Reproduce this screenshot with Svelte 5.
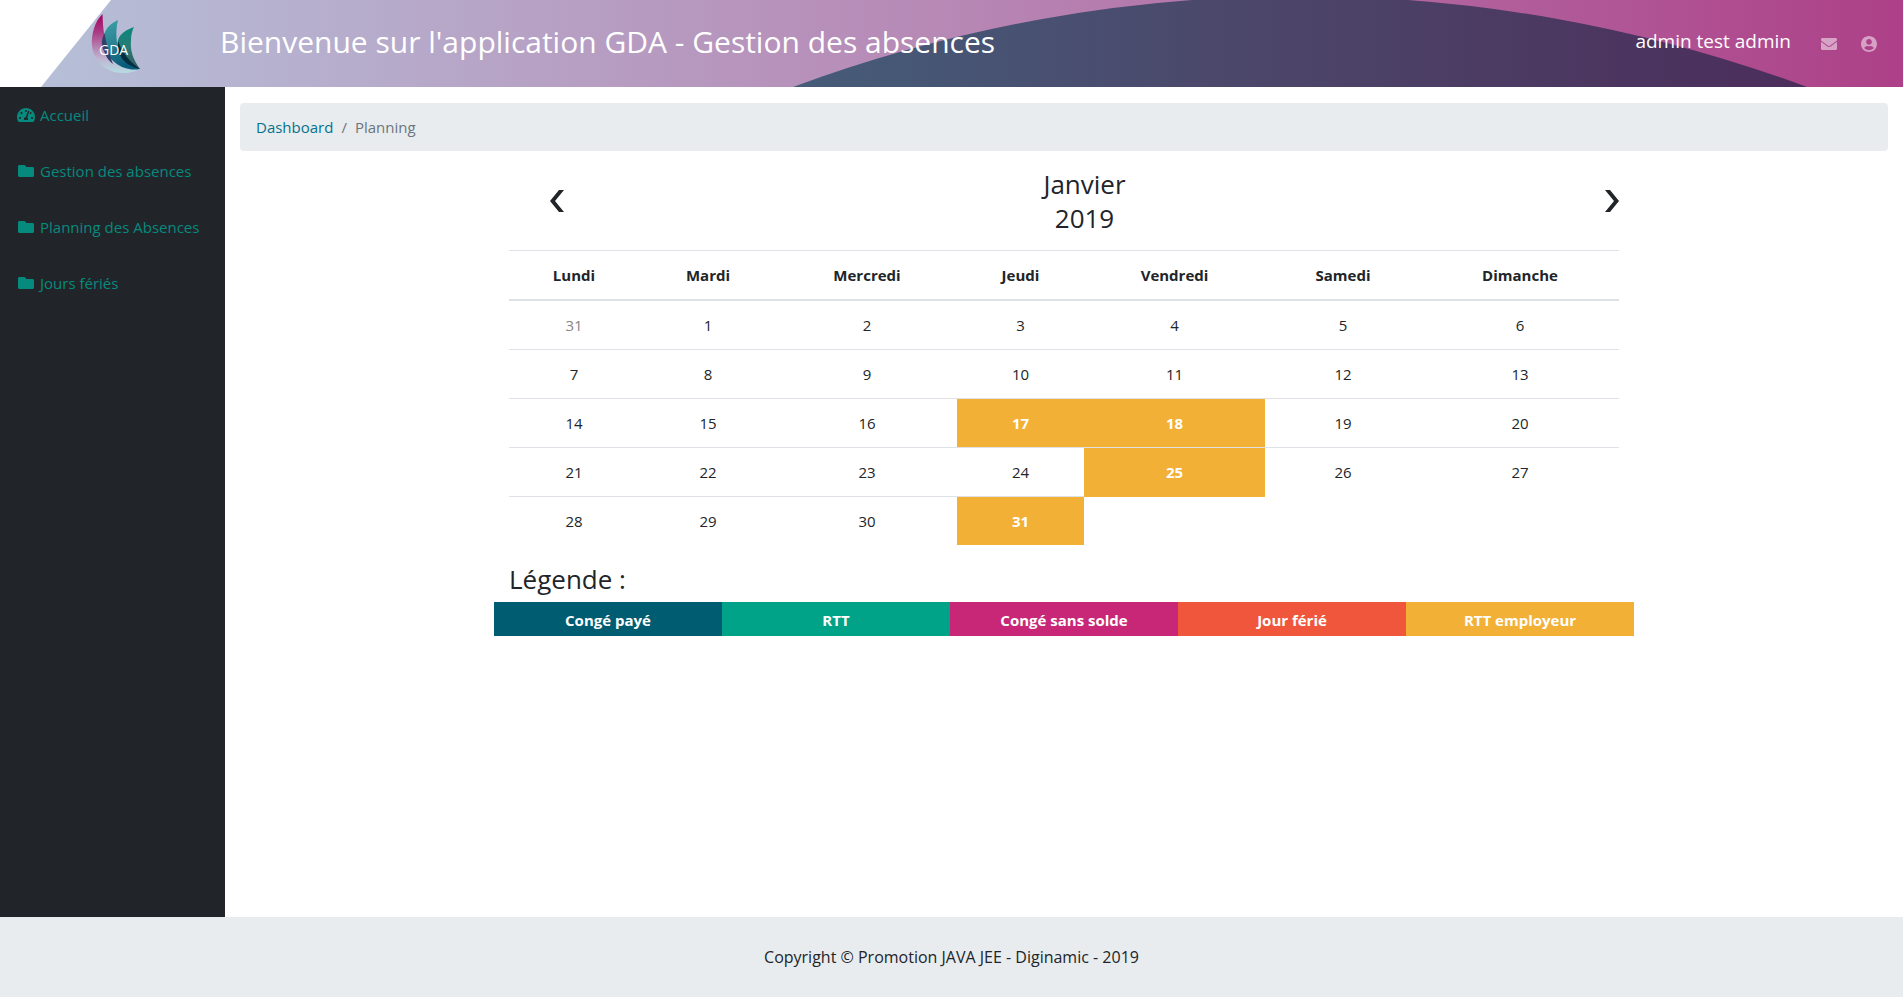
<script>
  const menu = [
    { label: 'Accueil', icon: 'gauge' },
    { label: 'Gestion des absences', icon: 'folder' },
    { label: 'Planning des Absences', icon: 'folder' },
    { label: 'Jours fériés', icon: 'folder' }
  ];

  const columns = [
    { day: 'Lundi', width: 130 },
    { day: 'Mardi', width: 138 },
    { day: 'Mercredi', width: 180 },
    { day: 'Jeudi', width: 127 },
    { day: 'Vendredi', width: 181 },
    { day: 'Samedi', width: 156 },
    { day: 'Dimanche', width: 198 }
  ];

  const employerDays = [17, 18, 25, 31];

  const weeks = [
    [{ n: 31, other: true }, ...range(1, 6)],
    range(7, 13),
    range(14, 20),
    range(21, 27),
    range(28, 31)
  ];

  const legend = [
    { label: 'Congé payé', kind: 'paid' },
    { label: 'RTT', kind: 'rtt' },
    { label: 'Congé sans solde', kind: 'unpaid' },
    { label: 'Jour férié', kind: 'holiday' },
    { label: 'RTT employeur', kind: 'employer' }
  ];

  function range(from, to) {
    return Array.from({ length: to - from + 1 }, (_, i) => ({
      n: from + i,
      employer: employerDays.includes(from + i)
    }));
  }
</script>

<div class="page">
  <header class="topbar">
    <svg class="backdrop" viewBox="0 0 1903 87" preserveAspectRatio="none" aria-hidden="true">
      <defs>
        <linearGradient id="sky" x1="0" x2="1903" y1="0" y2="0" gradientUnits="userSpaceOnUse">
          <stop offset="0" stop-color="#b6c2d9" />
          <stop offset="0.5" stop-color="#b788b5" />
          <stop offset="1" stop-color="#ad4088" />
        </linearGradient>
        <linearGradient id="hill" x1="793" x2="1807" y1="0" y2="0" gradientUnits="userSpaceOnUse">
          <stop offset="0" stop-color="#455c79" />
          <stop offset="0.5" stop-color="#4c4469" />
          <stop offset="1" stop-color="#4b2d5b" />
        </linearGradient>
      </defs>
      <path d="M111 0H1903V87H41Z" fill="url(#sky)" />
      <path d="M793 87A1458 1458 0 0 1 1807 87Z" fill="url(#hill)" />
    </svg>
    <a class="logo" href="#accueil" aria-label="GDA">
      <svg width="50" height="60" viewBox="91 13 50 60">
        <defs>
          <linearGradient id="pink" x1="0" x2="0" y1="0" y2="1">
            <stop offset="0" stop-color="#a3005f" />
            <stop offset="0.3" stop-color="#a93a83" />
            <stop offset="0.75" stop-color="#c0b4d0" />
            <stop offset="1" stop-color="#b5dce3" />
          </linearGradient>
          <linearGradient id="blue" x1="0" x2="0.3" y1="0" y2="1">
            <stop offset="0" stop-color="#3aa3a5" />
            <stop offset="0.5" stop-color="#2b8293" />
            <stop offset="1" stop-color="#075b7a" />
          </linearGradient>
          <linearGradient id="green" x1="0" x2="0" y1="0" y2="1">
            <stop offset="0" stop-color="#06897c" />
            <stop offset="0.5" stop-color="#2b7a75" />
            <stop offset="1" stop-color="#33585f" />
          </linearGradient>
        </defs>
        <path d="M102.500 14C95 21 91 34 92 46C94 62 107 73 123 73C131 73 136 71 140 69C126 68 113 57 107 43C103 34 103 24 102.500 14Z" fill="url(#pink)" />
        <path d="M118 20C106 25 101 36 104 46C109 62 124 72 140 69C128 63 119 55 117 43C116 35 116 28 118 20Z" fill="url(#blue)" />
        <path d="M104.500 33C101 40 101 46 104 51C106 57 109 61 113 64C110 56 107 47 104.500 33Z" fill="#35406a" />
        <path d="M134 27C122 31 116 38 118 46C121 56 129 65 140 69C133 60 130 50 131 40C131 35 132 31 134 27Z" fill="url(#green)" />
        <path d="M118 41C116 55 125 66 140 69C130 62 123 54 118 41Z" fill="#052f40" />
        <text x="99" y="55" class="mark">GDA</text>
      </svg>
    </a>
    <h1>Bienvenue sur l'application GDA - Gestion des absences</h1>
    <span class="user">admin test admin</span>
    <a class="tool" href="#messages" aria-label="Messages">
      <svg width="16" height="16" viewBox="0 0 512 512" fill="currentColor"><path d="M502.300 190.800c3.900-3.100 9.700-.2 9.700 4.700V400c0 26.500-21.500 48-48 48H48c-26.500 0-48-21.500-48-48V195.600c0-5 5.700-7.800 9.700-4.700 22.400 17.400 52.100 39.500 154.100 113.600 21.100 15.400 56.700 47.800 92.200 47.600 35.700.3 72-32.800 92.300-47.600 102-74.100 131.600-96.300 154-113.700zM256 320c23.200.4 56.600-29.200 73.400-41.400 132.700-96.300 142.800-104.700 173.400-128.700 5.800-4.500 9.200-11.500 9.200-18.900v-19c0-26.500-21.500-48-48-48H48c-26.500 0-48 21.500-48 48v19c0 7.400 3.400 14.300 9.200 18.900 30.600 23.900 40.700 32.400 173.400 128.700 16.800 12.200 50.200 41.800 73.400 41.400z" /></svg>
    </a>
    <a class="tool" href="#profil" aria-label="Profil">
      <svg width="16" height="16" viewBox="0 0 496 496" fill="currentColor"><path d="M248 0C111 0 0 111 0 248s111 248 248 248 248-111 248-248S385 0 248 0zm0 96c48.600 0 88 39.400 88 88s-39.400 88-88 88-88-39.400-88-88 39.400-88 88-88zm0 344c-58.700 0-111.300-26.600-146.500-68.200 18.800-35.400 55.600-59.800 98.500-59.800 2.400 0 4.800.4 7.100 1.100 13 4.200 26.600 6.900 40.900 6.900s28-2.700 40.900-6.900c2.300-.7 4.700-1.100 7.100-1.100 42.900 0 79.700 24.400 98.500 59.800C359.300 413.400 306.700 440 248 440z" /></svg>
    </a>
  </header>

  <div class="body">
    <nav class="sidebar" aria-label="Menu principal">
      {#each menu as item}
        <a href="#{item.icon}">
          {#if item.icon === 'gauge'}
            <svg width="18" height="16" viewBox="0 0 576 512" fill="currentColor"><path d="M288 32C128.940 32 0 160.940 0 320c0 52.800 14.250 102.260 39.060 144.800 5.610 9.620 16.300 15.200 27.440 15.200h443c11.140 0 21.830-5.580 27.440-15.200C561.750 422.260 576 372.800 576 320c0-159.060-128.940-288-288-288zm0 64c14.710 0 26.580 10.130 30.320 23.650-1.110 2.260-2.640 4.230-3.450 6.670l-9.220 27.670c-5.130 3.490-10.970 6.010-17.640 6.010-17.670 0-32-14.330-32-32S270.330 96 288 96zM96 384c-17.670 0-32-14.330-32-32s14.330-32 32-32 32 14.330 32 32-14.330 32-32 32zm48-160c-17.670 0-32-14.330-32-32s14.330-32 32-32 32 14.330 32 32-14.330 32-32 32zm246.770-72.410l-61.330 184C343.130 347.330 352 364.540 352 384c0 11.720-3.380 22.550-8.880 32H232.880c-5.500-9.450-8.880-20.280-8.880-32 0-33.940 26.500-61.430 59.900-63.590l61.340-184.010c4.170-12.560 17.730-19.450 30.360-15.170 12.570 4.190 19.350 17.790 15.170 30.360zm14.660 57.200l15.520-46.550c3.470-1.290 7.130-2.230 11.050-2.230 17.670 0 32 14.330 32 32s-14.330 32-32 32c-11.380-.01-21.250-6.100-26.570-15.220zM480 384c-17.670 0-32-14.330-32-32s14.330-32 32-32 32 14.330 32 32-14.330 32-32 32z" /></svg>
          {:else}
            <svg width="18" height="16" viewBox="-32 0 576 512" fill="currentColor"><path d="M464 128H272l-64-64H48C21.490 64 0 85.490 0 112v288c0 26.510 21.490 48 48 48h416c26.510 0 48-21.490 48-48V176c0-26.510-21.490-48-48-48z" /></svg>
          {/if}
          <span>{item.label}</span>
        </a>
      {/each}
    </nav>

    <main>
      <nav class="breadcrumb" aria-label="Fil d'Ariane">
        <a href="#dashboard">Dashboard</a>
        <span>/</span>
        <span>Planning</span>
      </nav>

      <section class="planning">
        <div class="month">
          <button class="prev" aria-label="Mois précédent">
            <svg width="14" height="22" viewBox="0 0 14 22" fill="currentColor"><path d="M9 0H14L5 11L14 22H9L0 11Z" /></svg>
          </button>
          <h2>Janvier<br />2019</h2>
          <button aria-label="Mois suivant">
            <svg width="14" height="22" viewBox="0 0 14 22" fill="currentColor"><path d="M5 0H0L9 11L0 22H5L14 11Z" /></svg>
          </button>
        </div>

        <table>
          <colgroup>
            {#each columns as column}
              <col style="width: {column.width}px" />
            {/each}
          </colgroup>
          <thead>
            <tr>
              {#each columns as column}
                <th scope="col">{column.day}</th>
              {/each}
            </tr>
          </thead>
          <tbody>
            {#each weeks as week}
              <tr>
                {#each week as day}
                  <td class:other={day.other} class:employer={day.employer}>{day.n}</td>
                {/each}
              </tr>
            {/each}
          </tbody>
        </table>

        <h2 class="legend-title">Légende :</h2>
        <ul class="legend">
          {#each legend as entry}
            <li class={entry.kind}>{entry.label}</li>
          {/each}
        </ul>
      </section>
    </main>
  </div>

  <footer>Copyright © Promotion JAVA JEE - Diginamic - 2019</footer>
</div>

<style>
  :global(body) {
    margin: 0;
  }

  .page {
    min-height: 100vh;
    display: flex;
    flex-direction: column;
    background: #fff;
    color: #212529;
    font: 15px/24px "Open Sans", "Noto Sans", sans-serif;
  }

  .page * {
    box-sizing: border-box;
  }

  a {
    text-decoration: none;
  }

  svg {
    display: block;
    flex: none;
  }

  h1,
  h2 {
    margin: 0;
    font-weight: 400;
  }

  .topbar {
    position: relative;
    display: flex;
    align-items: center;
    height: 87px;
    padding: 0 26px 0 91px;
    color: #fff;
  }

  .backdrop {
    position: absolute;
    inset: 0;
    width: 100%;
    height: 100%;
  }

  .logo,
  h1,
  .user,
  .tool {
    position: relative;
  }

  .logo {
    padding-bottom: 2px;
  }

  .mark {
    fill: #fff;
    font-size: 14px;
  }

  h1 {
    flex: 1;
    margin-left: 79px;
    font-size: 30px;
    line-height: 38px;
    padding-bottom: 4px;
  }

  .user {
    margin-right: 14px;
    padding-bottom: 6px;
    font-size: 19px;
  }

  .tool {
    margin-left: 16px;
    color: rgba(255, 255, 255, 0.5);
  }

  .tool + .tool {
    margin-left: 24px;
  }

  .body {
    flex: 1;
    display: flex;
  }

  .sidebar {
    flex: none;
    width: 225px;
    background: #212529;
  }

  .sidebar a {
    display: flex;
    align-items: center;
    gap: 5px;
    padding: 16px 17px;
    color: #068a7e;
    white-space: nowrap;
  }

  main {
    flex: 1;
    min-width: 0;
    padding: 16px 15px;
  }

  .breadcrumb {
    display: flex;
    gap: 8px;
    margin-bottom: 16px;
    padding: 12px 16px;
    border-radius: 4px;
    background: #e8ecef;
    color: #6c757d;
  }

  .breadcrumb a {
    color: #05728c;
  }

  .planning {
    max-width: 1140px;
    margin: 0 auto;
    padding: 0 15px;
  }

  .month {
    display: flex;
    align-items: center;
    justify-content: space-between;
    height: 83px;
    padding-bottom: 16px;
    text-align: center;
  }

  h2 {
    font-size: 26px;
    line-height: 34px;
  }

  button {
    padding: 0;
    border: 0;
    background: none;
    color: inherit;
  }

  .prev {
    padding-left: 41px;
  }

  table {
    width: 100%;
    margin-bottom: 17px;
    border-collapse: collapse;
    table-layout: fixed;
    text-align: center;
  }

  th,
  td {
    padding: 12px;
    border-top: 1px solid #dee2e6;
  }

  th {
    border-bottom: 2px solid #dee2e6;
    font-weight: 700;
  }

  td.other {
    color: #868686;
  }

  td.employer {
    color: #fff;
    font-weight: 700;
  }

  .legend-title {
    margin-bottom: 6px;
  }

  .legend {
    display: flex;
    margin: 0 -15px;
    padding: 0;
    list-style: none;
    color: #fff;
    font-weight: 700;
    text-align: center;
  }

  .legend li {
    flex: 1;
    padding: 6px 0 4px;
  }

  .paid {
    background: #005c71;
  }

  .rtt {
    background: #00a388;
  }

  .unpaid {
    background: #c82777;
  }

  .holiday {
    background: #ef563b;
  }

  .employer {
    background: #f3b036;
    background-clip: padding-box;
  }

  footer {
    padding: 28px 16px;
    background: #e8ecef;
    font-size: 16px;
    text-align: center;
  }
</style>
